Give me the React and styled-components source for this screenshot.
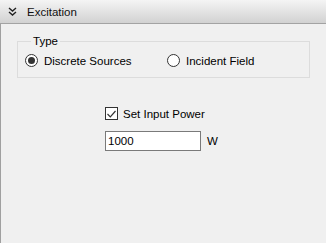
import React, { useState } from "react";
import styled, { createGlobalStyle } from "styled-components";

const Global = createGlobalStyle`
  html, body {
    margin: 0;
    padding: 0;
    background: #f0f0f0;
  }
  body {
    font-family: "Liberation Sans", Arial, sans-serif;
    font-size: 11px;
    color: #000;
  }
`;

const Panel = styled.div`
  width: 326px;
  height: 243px;
  display: flex;
  flex-direction: column;
  background: #f0f0f0;
`;

const Header = styled.div`
  height: 23px;
  display: flex;
  align-items: center;
  gap: 10px;
  padding-left: 8px;
  background: linear-gradient(#f4f4f4, #d2d2d2);
  border-bottom: 1px solid #a3a3a3;
`;

const Title = styled.span`
  font-size: 11.5px;
  color: #111;
`;

const Body = styled.div`
  flex: 1;
  border-left: 1px solid #a0a0a0;
  padding: 11px 16px 0 16px;
  display: flex;
  flex-direction: column;
`;

const Group = styled.fieldset`
  margin: 0;
  padding: 7px 8px 10px 7px;
  border: 1px solid #dcdcdc;
  display: flex;
  align-items: center;
`;

const Legend = styled.legend`
  padding: 0 2px;
  margin-left: 6px;
  font-size: 11.5px;
`;

const RadioLabel = styled.label`
  display: flex;
  align-items: center;
  gap: 6px;
  width: ${(p) => p.w}px;
  font-size: 11.5px;
  cursor: default;
`;

const RadioDot = styled.span`
  width: 11px;
  height: 11px;
  border-radius: 50%;
  border: 1px solid #333;
  background: #fff;
  display: flex;
  align-items: center;
  justify-content: center;
  &::after {
    content: "";
    width: 7px;
    height: 7px;
    border-radius: 50%;
    background: ${(p) => (p.on ? "#333" : "transparent")};
  }
`;

const PowerBlock = styled.div`
  margin-top: 29px;
  margin-left: 88px;
  display: flex;
  flex-direction: column;
  gap: 11px;
`;

const CheckRow = styled.label`
  display: flex;
  align-items: center;
  gap: 5px;
  font-size: 11.5px;
`;

const Box = styled.span`
  width: 11px;
  height: 11px;
  border: 1px solid #333;
  background: #fff;
  display: flex;
  align-items: center;
  justify-content: center;
`;

const InputRow = styled.div`
  display: flex;
  align-items: center;
  gap: 6px;
`;

const Input = styled.input`
  width: 90px;
  height: 16px;
  padding: 1px 2px;
  border: 1px solid #7a7a7a;
  background: #fff;
  font-family: inherit;
  font-size: 11.5px;
  outline: none;
`;

const Unit = styled.span`
  font-size: 11.5px;
`;

function Chevrons() {
  return (
    <svg width="9" height="9" viewBox="0 0 9 9">
      <path d="M1 1 L4.5 4 L8 1 M1 5 L4.5 8 L8 5" fill="none" stroke="#222" strokeWidth="1.4" />
    </svg>
  );
}

function App() {
  const [type, setType] = useState("discrete");
  const [power, setPower] = useState(true);
  const [value, setValue] = useState("1000");

  return (
    <>
      <Global />
      <Panel>
        <Header>
          <Chevrons />
          <Title>Excitation</Title>
        </Header>
        <Body>
          <Group>
            <Legend>Type</Legend>
            <RadioLabel w={142} onClick={() => setType("discrete")}>
              <RadioDot on={type === "discrete"} />
              Discrete Sources
            </RadioLabel>
            <RadioLabel w={130} onClick={() => setType("incident")}>
              <RadioDot on={type === "incident"} />
              Incident Field
            </RadioLabel>
          </Group>
          <PowerBlock>
            <CheckRow onClick={() => setPower(!power)}>
              <Box>
                {power && (
                  <svg width="9" height="8" viewBox="0 0 9 8">
                    <path d="M0.5 4 L3.3 6.8 L8.5 1" fill="none" stroke="#333" strokeWidth="1.2" />
                  </svg>
                )}
              </Box>
              Set Input Power
            </CheckRow>
            <InputRow>
              <Input value={value} onChange={(e) => setValue(e.target.value)} />
              <Unit>W</Unit>
            </InputRow>
          </PowerBlock>
        </Body>
      </Panel>
    </>
  );
}

export default App;
